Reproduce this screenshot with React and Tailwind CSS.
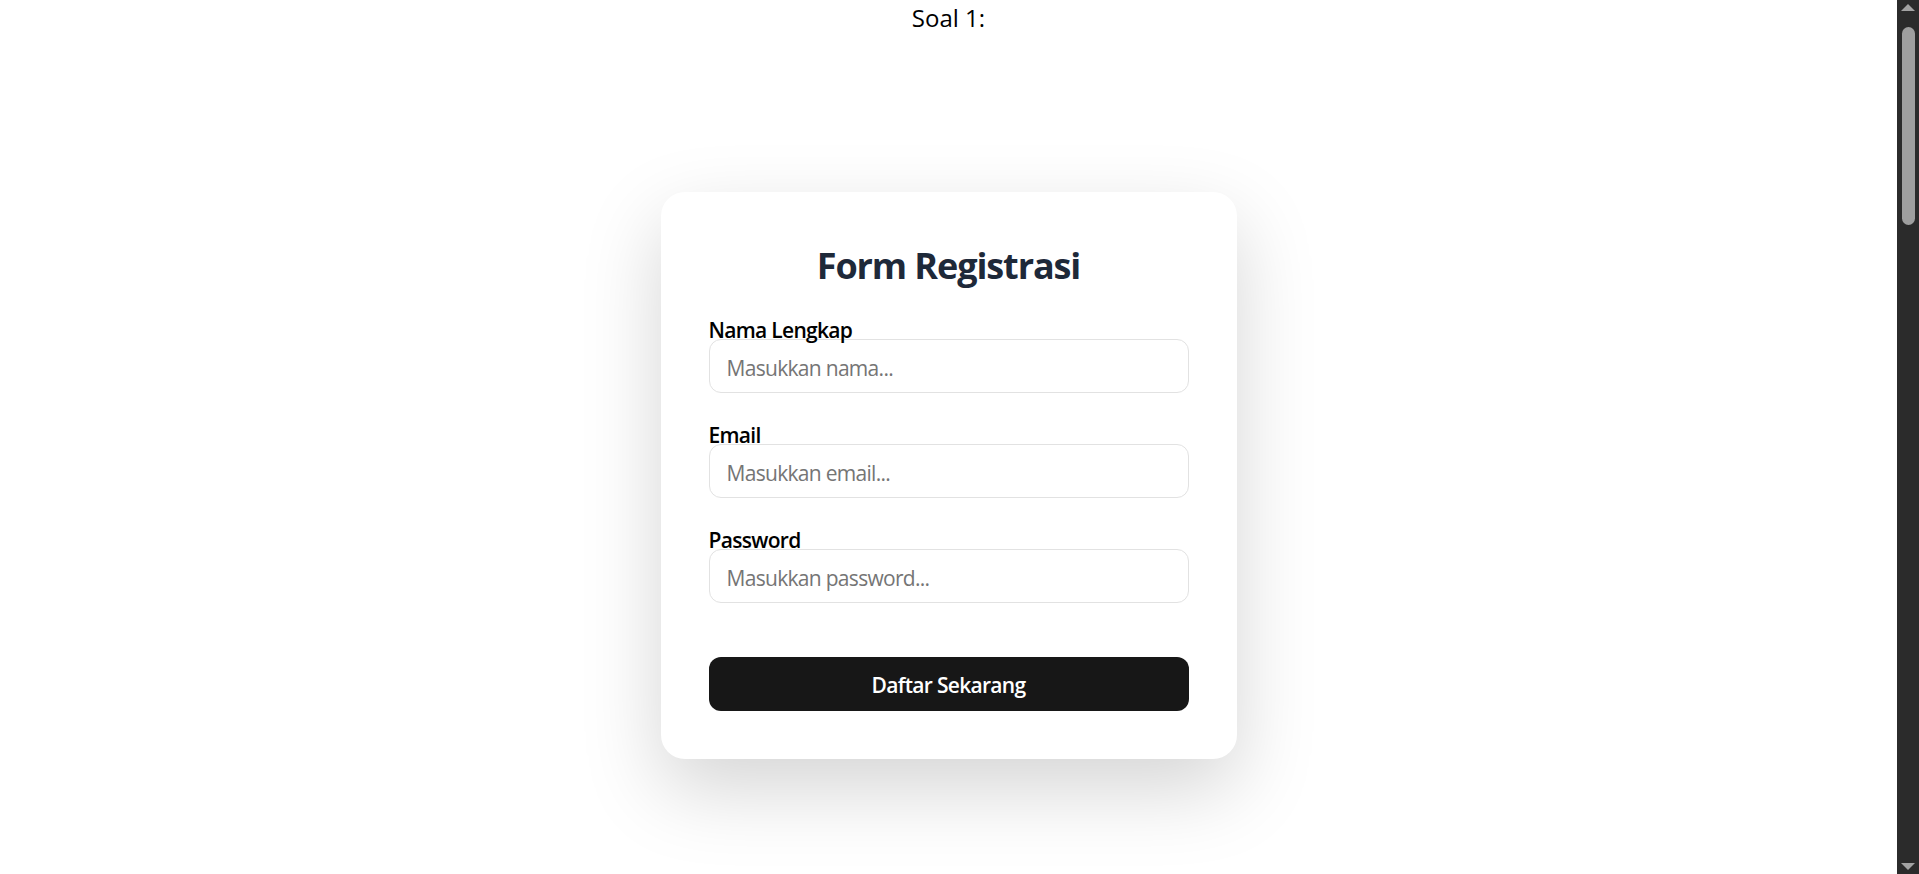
import React from "react";

const font = { fontFamily: '"Open Sans", "Noto Sans", sans-serif' };

function Field({ label, type, placeholder }) {
  return (
    <div className="mb-[30px]">
      <label className="relative z-10 -mb-[4px] block text-[21px] font-semibold leading-[25px] tracking-[-0.7px] text-black">{label}</label>
      <input
        type={type}
        placeholder={placeholder}
        className="block h-[54px] w-full rounded-xl border border-[#e2e2e2] bg-white px-[17px] pt-[4px] text-[21px] tracking-[-0.7px] text-black outline-none placeholder:text-[#757575]"
      />
    </div>
  );
}

function Scrollbar() {
  return (
    <div className="flex w-[22px] shrink-0 flex-col items-center bg-[#2b2b2b]">
      <div className="mt-[4px] h-0 w-0 border-x-[7px] border-b-[7px] border-x-transparent border-b-[#a3a3a3]" />
      <div className="mt-[16px] h-[198px] w-[13px] rounded-full bg-[#9f9f9f]" />
      <div className="mb-[4px] mt-auto h-0 w-0 border-x-[7px] border-t-[7px] border-x-transparent border-t-[#a3a3a3]" />
    </div>
  );
}

export default function App() {
  return (
    <div className="flex h-[874px] overflow-hidden bg-white" style={font}>
      <div className="flex flex-1 flex-col">
        <p className="text-center text-2xl leading-9 text-black">Soal 1:</p>

        <div className="flex justify-center pt-[156px]">
          <form className="flex w-full max-w-xl flex-col rounded-3xl bg-white p-12 shadow-[0_30px_80px_rgba(0,0,0,0.17)]">
            <h2 className="mb-[28px] pt-[2px] text-center text-4xl font-bold leading-[48px] tracking-[-1.1px] text-gray-800">Form Registrasi</h2>

            <Field label="Nama Lengkap" type="text" placeholder="Masukkan nama..." />
            <Field label="Email" type="email" placeholder="Masukkan email..." />
            <Field label="Password" type="password" placeholder="Masukkan password..." />

            <button
              type="button"
              className="mt-[24px] block h-[54px] w-full rounded-xl bg-[#171717] pt-[3px] text-[21px] font-semibold tracking-[-0.7px] text-white"
            >
              Daftar Sekarang
            </button>
          </form>
        </div>
      </div>
      <Scrollbar />
    </div>
  );
}
